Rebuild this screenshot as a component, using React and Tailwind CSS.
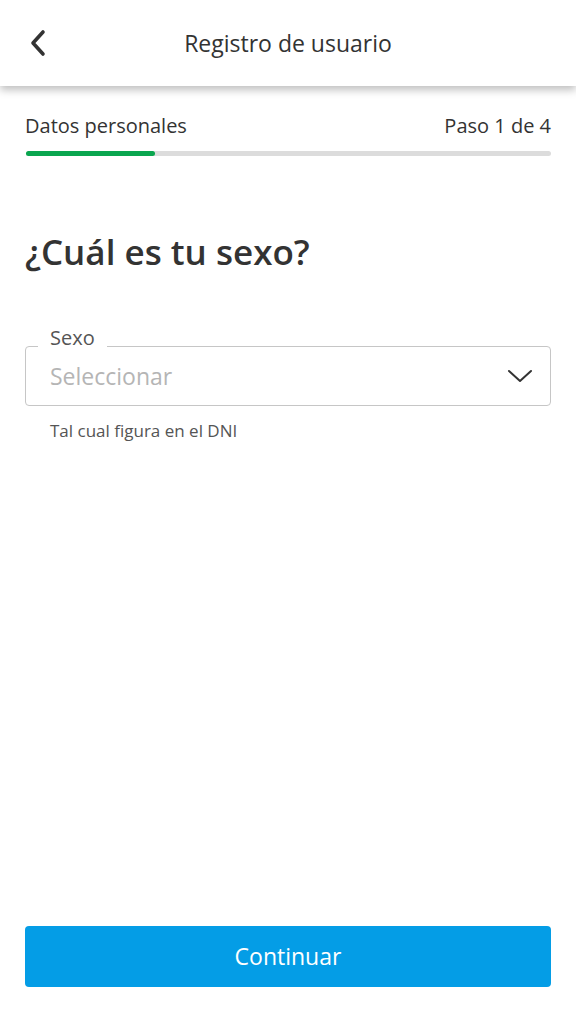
const App = () => {
  return (
    <div
      className="w-[576px] h-[1024px] bg-white flex flex-col text-[#333333]"
      style={{ fontFamily: '"Open Sans", "Noto Sans", sans-serif' }}
    >
      <header className="relative z-10 h-[86px] shrink-0 bg-white flex items-center px-[25px] shadow-[0_4px_8px_rgba(0,0,0,0.25)]">
        <svg width="22" height="28" viewBox="0 0 22 28" className="ml-[2px]">
          <path d="M16 3 L6 14 L16 25" fill="none" stroke="#333333" strokeWidth="3.6" strokeLinecap="round" strokeLinejoin="round" />
        </svg>
        <h1 className="absolute left-0 right-0 text-center text-[23px] leading-none pointer-events-none text-[#333333]">
          Registro de usuario
        </h1>
      </header>

      <main className="flex-1 flex flex-col px-[25px]">
        <div className="flex justify-between items-center mt-[27px] text-[20px] leading-[26px] text-[#333333]">
          <span>Datos personales</span>
          <span>Paso 1 de 4</span>
        </div>
        <div className="mt-[12px] h-[5px] rounded-full bg-[#dcdcdc] ml-px">
          <div className="h-full w-[129px] rounded-full bg-[#0aa64f]" />
        </div>

        <h2 className="mt-[74px] text-[35px] leading-[44px] font-semibold text-[#333333]">
          ¿Cuál es tu sexo?
        </h2>

        <div className="mt-[72px] relative">
          <span className="absolute left-[13px] top-[-21px] bg-white px-[12px] text-[20px] leading-[26px] text-[#555555]">
            Sexo
          </span>
          <div className="h-[60px] border border-[#c6c6c6] rounded-[4px] flex items-center justify-between pl-[24px] pr-[17px]">
            <span className="text-[23px] text-[#b5b5b5]">Seleccionar</span>
            <svg width="26" height="16" viewBox="0 0 26 16">
              <path d="M2 3 L13 13 L24 3" fill="none" stroke="#333333" strokeWidth="2" strokeLinecap="round" strokeLinejoin="round" />
            </svg>
          </div>
        </div>
        <p className="mt-[13px] pl-[25px] text-[17px] leading-[24px] text-[#555555]">Tal cual figura en el DNI</p>

        <div className="flex-1" />

        <button className="mb-[37px] h-[61px] w-full rounded-[4px] bg-[#049de6] text-white text-[23px]">
          Continuar
        </button>
      </main>
    </div>
  );
};

export default App;
